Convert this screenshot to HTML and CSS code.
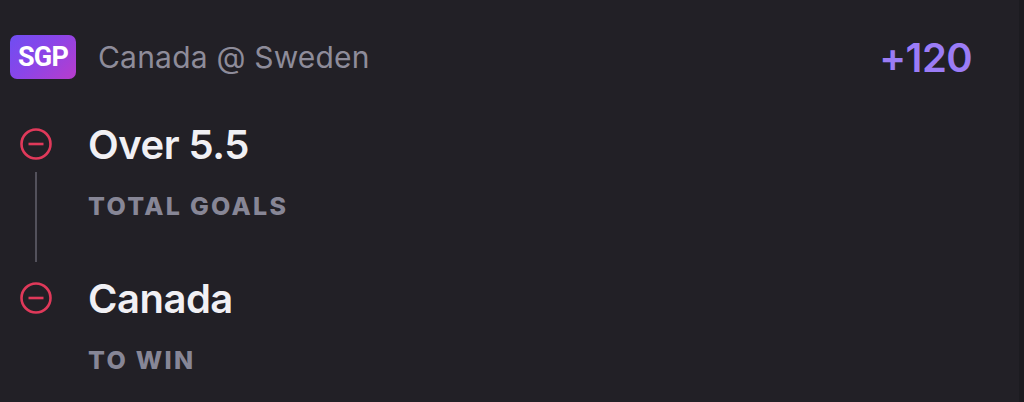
FILE: index.html
```html
<!DOCTYPE html>
<html>
<head>
<meta charset="utf-8">
<link rel="stylesheet" href="styles.css">
</head>
<body>
<div class="page">
  <div class="card">
    <div class="header">
      <span class="badge">SGP</span>
      <span class="event">Canada @ Sweden</span>
      <span class="odds">+120</span>
    </div>
    <div class="legs">
      <div class="leg">
        <div class="rail">
          <svg class="icon" viewBox="0 0 32 32" width="32" height="32"><circle cx="16" cy="16" r="14.5" fill="none" stroke="#e0395a" stroke-width="2.6"/><line x1="8.5" y1="16" x2="23.5" y2="16" stroke="#e0395a" stroke-width="2.6"/></svg>
          <div class="line"></div>
        </div>
        <div class="info">
          <div class="title">Over 5.5</div>
          <div class="sub">TOTAL GOALS</div>
        </div>
      </div>
      <div class="leg">
        <div class="rail">
          <svg class="icon" viewBox="0 0 32 32" width="32" height="32"><circle cx="16" cy="16" r="14.5" fill="none" stroke="#e0395a" stroke-width="2.6"/><line x1="8.5" y1="16" x2="23.5" y2="16" stroke="#e0395a" stroke-width="2.6"/></svg>
        </div>
        <div class="info">
          <div class="title">Canada</div>
          <div class="sub">TO WIN</div>
        </div>
      </div>
    </div>
  </div>
  <div class="edge"></div>
</div>
</body>
</html>
```
FILE: styles.css
```css
html, body {
  margin: 0;
  padding: 0;
  background: #222026;
  height: 100%;
}
body {
  font-family: Inter, "Noto Sans", sans-serif;
  overflow: hidden;
}
.page {
  display: flex;
  height: 402px;
}
.card {
  flex: 1;
  padding: 35px 47px 0 10px;
}
.edge {
  width: 5px;
  background: #1c1b20;
}
.header {
  display: flex;
  align-items: center;
  height: 44px;
}
.badge {
  display: flex;
  align-items: center;
  justify-content: center;
  width: 66px;
  height: 44px;
  border-radius: 7px;
  background: linear-gradient(135deg, #6f4ef2 0%, #8a45e8 45%, #b83ccc 100%);
  color: #ffffff;
  font-family: Roboto, "Noto Sans", sans-serif;
  font-weight: 700;
  font-size: 27px;
  letter-spacing: -0.8px;
}
.event {
  margin-left: 22px;
  color: #8e8c9a;
  font-size: 30px;
  font-weight: 400;
  letter-spacing: 0.2px;
  flex: 1;
}
.odds {
  color: #9b7cf6;
  font-size: 40px;
  font-weight: 600;
  letter-spacing: -0.6px;
}
.legs {
  display: flex;
  flex-direction: column;
  margin-top: 49px;
}
.leg {
  display: flex;
  padding-left: 10px;
}
.rail {
  width: 32px;
  display: flex;
  flex-direction: column;
  align-items: center;
}
.icon {
  display: block;
  flex: none;
}
.line {
  flex: 1;
  width: 2px;
  background: #53515b;
  margin: 12px 0 20px;
}
.info {
  margin-left: 36px;
  display: flex;
  flex-direction: column;
  margin-top: -7px;
  padding-bottom: 62px;
}
.leg:last-child .info {
  padding-bottom: 0;
}
.title {
  color: #f1f0f4;
  font-size: 40px;
  font-weight: 600;
  line-height: 48px;
  letter-spacing: -0.5px;
}
.sub {
  margin-top: 23px;
  color: #878696;
  font-size: 25px;
  font-weight: 800;
  letter-spacing: 2.3px;
  line-height: 28px;
}
```
